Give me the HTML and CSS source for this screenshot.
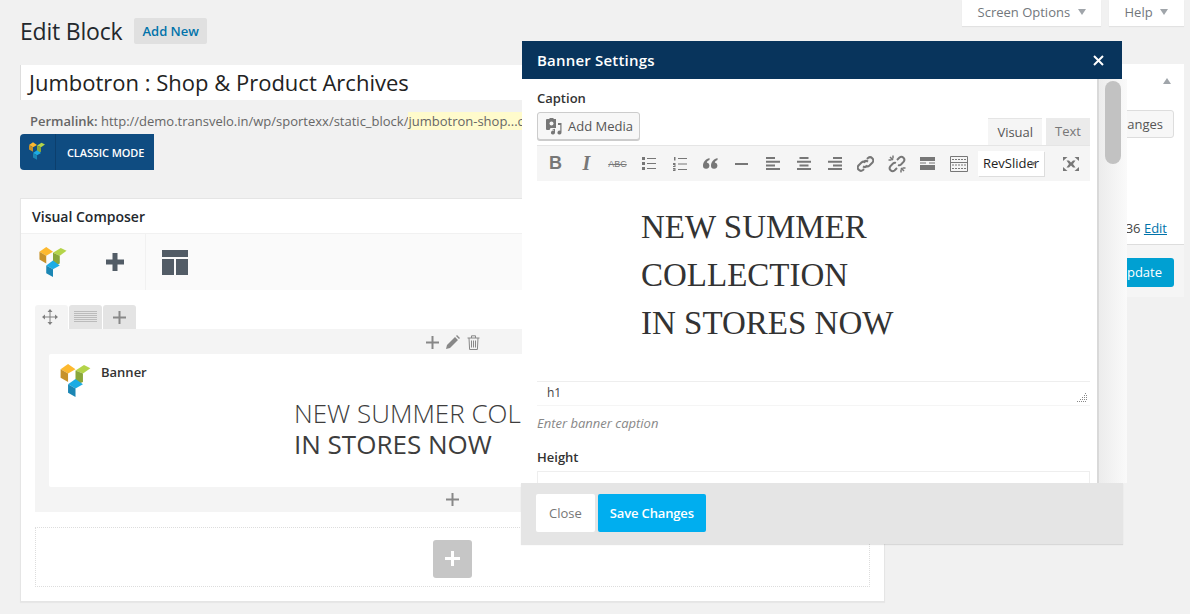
FILE: index.html
```html
<!DOCTYPE html>
<html lang="en">
<head>
   <meta charset="UTF-8">
   <title>Edit Block</title>
   <link rel="stylesheet" href="styles.css">
</head>
<body>
   <svg class="defs" width="0" height="0">
       <symbol id="vc-logo" viewBox="0 0 28 31">
           <path fill="#fdb92f" d="M0 5 7 0l7 5-7 4z"/>
           <path fill="#c7922a" d="M0 5l7 4v8l-7-4z"/>
           <path fill="#b4d44a" d="M14 6l8-5 6 3-7 5z"/>
           <path fill="#89a63a" d="M14 6l7 3v8l-7 3z"/>
           <path fill="#1cace4" d="M7 19l7-5 7 5-7 4z"/>
           <path fill="#1b86b4" d="M7 19l7 4v8l-7-4z"/>
       </symbol>
   </svg>

   <div class="screen-tabs">
       <div class="screen-tab">Screen Options <span class="arrow-down"></span></div>
       <div class="screen-tab screen-tab-help">Help <span class="arrow-down"></span></div>
   </div>

   <div class="page-head">
       <h1>Edit Block</h1>
       <span class="add-new">Add New</span>
   </div>

   <div class="columns">
       <div class="main-col">
           <div class="title-input">Jumbotron : Shop &amp; Product Archives</div>
           <p class="permalink"><b>Permalink:</b> http://demo.transvelo.in/wp/sportexx/static_block/<span class="slug">jumbotron-shop...child</span></p>
           <div class="classic-btn">
               <span class="classic-logo"><svg width="16" height="18"><use href="#vc-logo"/></svg></span>
               <span class="classic-text">CLASSIC MODE</span>
           </div>

           <div class="vc-box">
               <div class="vc-title">Visual Composer</div>
               <div class="vc-toolbar">
                   <svg class="vc-logo-big" width="28" height="30"><use href="#vc-logo"/></svg>
                   <svg class="vc-plus" width="20" height="20" viewBox="0 0 20 20"><path fill="#525c66" d="M7.500 1h5v6.500H19v5h-6.500V19h-5v-6.500H1v-5h6.500z"/></svg>
                   <span class="vc-sep"></span>
                   <svg class="vc-layout" width="26" height="25" viewBox="0 0 26 25"><path fill="#525c66" d="M0 0h26v7H0zM0 9h12v16H0zM14 9h12v16H14z"/></svg>
               </div>

               <div class="vc-content">
                   <div class="row-tabs">
                       <span class="row-tab row-tab-active">
                           <svg width="16" height="16" viewBox="0 0 16 16"><path fill="none" stroke="#808080" d="M8 1v14M1 8h14"/><path fill="#808080" d="M8 0l2.500 3h-5zM8 16l2.500-3h-5zM0 8l3-2.500v5zM16 8l-3-2.500v5z"/></svg>
                       </span>
                       <span class="row-tab">
                           <svg width="23" height="12" viewBox="0 0 23 12"><path stroke="#bbb" d="M0 .5h23M0 2.500h23M0 4.500h23M0 6.500h23M0 8.500h23M0 10.500h23"/></svg>
                       </span>
                       <span class="row-tab">
                           <svg width="13" height="13" viewBox="0 0 13 13"><path fill="#888" d="M5.500 0h2v5.500H13v2H7.500V13h-2V7.500H0v-2h5.500z"/></svg>
                       </span>
                   </div>
                   <div class="row-body">
                       <div class="row-controls">
                           <svg width="13" height="13" viewBox="0 0 13 13"><path fill="#888" d="M5.500 0h2v5.500H13v2H7.500V13h-2V7.500H0v-2h5.500z"/></svg>
                           <svg width="14" height="14" viewBox="0 0 14 14"><path fill="#888" d="M0 14l1-4 8-8 3 3-8 8zM10 1l1-1 3 3-1 1z"/></svg>
                           <svg width="13" height="15" viewBox="0 0 13 15"><path fill="none" stroke="#888" d="M.5 3h12M2 3l.6 11.500h7.800L11 3M4.500 3V.8h4V3M4.500 5.500v7M6.500 5.500v7M8.500 5.500v7"/></svg>
                       </div>
                       <div class="banner-card">
                           <div class="banner-name">
                               <svg width="31" height="33" class="banner-logo"><use href="#vc-logo"/></svg>
                               <span>Banner</span>
                           </div>
                           <div class="banner-text">
                               <div class="banner-light">NEW SUMMER COLLECTION</div>
                               <div>IN STORES NOW</div>
                           </div>
                       </div>
                       <div class="row-bottom">
                           <svg width="13" height="13" viewBox="0 0 13 13"><path fill="#888" d="M5.500 0h2v5.500H13v2H7.500V13h-2V7.500H0v-2h5.500z"/></svg>
                       </div>
                   </div>
                   <div class="add-area">
                       <span class="add-btn">
                           <svg width="15" height="15" viewBox="0 0 15 15"><path fill="#fff" d="M6 0h3v6h6v3H9v6H6V9H0V6h6z"/></svg>
                       </span>
                   </div>
               </div>
           </div>
       </div>

       <div class="side-box">
           <div class="side-top">
               <span class="arrow-up"></span>
               <span class="preview-btn">Preview Changes</span>
               <div class="revisions">Revisions: 36 <u>Edit</u></div>
           </div>
           <div class="side-actions"><span class="update-btn">Update</span></div>
       </div>
   </div>

   <div class="modal">
       <div class="modal-head">
           <span>Banner Settings</span>
           <svg width="11" height="11" viewBox="0 0 11 11"><path stroke="#fff" stroke-width="2" d="M1 1l9 9M10 1l-9 9"/></svg>
       </div>
       <div class="modal-main">
           <div class="modal-body">
               <div class="field-label">Caption</div>
               <div class="editor-top">
                   <span class="media-btn">
                       <svg width="18" height="17" viewBox="0 0 18 17"><path fill="#777" d="M3 1h2l1-1h3l1 1h2v9H6.500L5.500 12H3a1 1 0 0 1-1-1V2a1 1 0 0 1 1-1z"/><circle cx="7.500" cy="5.500" r="2" fill="#f7f7f7"/><path fill="#777" d="M14 5h3.500v9.500a2 2 0 1 1-1.200-1.800V7H14zM8 11.500l3-.8v3.800a2 2 0 1 1-1.200-1.800V12z"/></svg>
                       Add Media
                   </span>
                   <div class="editor-tabs">
                       <span class="editor-tab editor-tab-active">Visual</span>
                       <span class="editor-tab">Text</span>
                   </div>
               </div>
               <div class="mce-toolbar">
                   <span class="mce-btn mce-b">B</span>
                   <span class="mce-btn mce-i">I</span>
                   <span class="mce-btn mce-abc">ABC</span>
                   <span class="mce-btn"><svg width="14" height="13" viewBox="0 0 14 13"><path fill="#777" d="M0 0h3v3H0zM0 5h3v3H0zM0 10h3v3H0zM5 1h9v1H5zM5 6h9v1H5zM5 11h9v1H5z"/></svg></span>
                   <span class="mce-btn"><svg width="14" height="14" viewBox="0 0 14 14"><path fill="#777" d="M1 0h1.500v3.500H1zM0 6h2.500v4H0v-1h1.500V8H0zM0 11h2.500v3H0v-1h1.500v-.5H0zM5 1h9v1H5zM5 6.500h9v1H5zM5 12h9v1H5z"/></svg></span>
                   <span class="mce-btn"><svg width="15" height="11" viewBox="0 0 15 11"><path fill="#777" d="M6.500 0v2C5 2.500 4 3.500 3.800 4.500a3.200 3.200 0 1 1-3.800 3C0 4 3 .8 6.500 0zM14.500 0v2C13 2.500 12 3.500 11.800 4.500a3.200 3.200 0 1 1-3.800 3C8 4 11 .8 14.500 0z"/></svg></span>
                   <span class="mce-btn"><svg width="13" height="2" viewBox="0 0 13 2"><path fill="#777" d="M0 0h13v2H0z"/></svg></span>
                   <span class="mce-btn"><svg width="14" height="13" viewBox="0 0 14 13"><path fill="#777" d="M0 0h9v2H0zM0 3.700h14v2H0zM0 7.400h9v2H0zM0 11h14v2H0z"/></svg></span>
                   <span class="mce-btn"><svg width="14" height="13" viewBox="0 0 14 13"><path fill="#777" d="M2.500 0h9v2h-9zM0 3.700h14v2H0zM2.500 7.400h9v2h-9zM0 11h14v2H0z"/></svg></span>
                   <span class="mce-btn"><svg width="14" height="13" viewBox="0 0 14 13"><path fill="#777" d="M5 0h9v2H5zM0 3.700h14v2H0zM5 7.400h9v2H5zM0 11h14v2H0z"/></svg></span>
                   <span class="mce-btn"><svg width="17" height="16" viewBox="0 0 17 16"><path fill="none" stroke="#777" stroke-width="2" d="M7 6a3 3 0 0 1 4-.4M10 3l1-1a3.200 3.200 0 0 1 4.500 4.500l-3 3a3 3 0 0 1-4 0M10 10a3 3 0 0 1-4 .4M7 13l-1 1a3.200 3.200 0 0 1-4.500-4.500l3-3a3 3 0 0 1 4 0"/></svg></span>
                   <span class="mce-btn"><svg width="18" height="18" viewBox="0 0 18 18"><path fill="none" stroke="#777" stroke-width="2" d="M9 5l2.500-2.500a3 3 0 0 1 4.200 4.200L13 9.500a3 3 0 0 1-3 .6M9 13l-2.500 2.500a3 3 0 0 1-4.200-4.200L5 8.500a3 3 0 0 1 3-.6"/><path fill="none" stroke="#777" stroke-width="1.500" d="M5 .5v3M.5 5h3M2 2l3 3M13 17.500v-3M17.500 13h-3M16 16l-3-3"/></svg></span>
                   <span class="mce-btn"><svg width="15" height="13" viewBox="0 0 15 13"><path fill="#777" d="M0 0h15v4H0zM0 8h15v5H0zM0 5.500h6v1H0zM9 5.500h6v1H9z"/></svg></span>
                   <span class="mce-btn"><svg width="18" height="16" viewBox="0 0 18 16"><path fill="none" stroke="#777" d="M.5.500h17v15H.500zM.5 6.500h17"/><path stroke="#777" stroke-dasharray="2 1" d="M2 3.500h14M2 9h14M2 12.500h14"/></svg></span>
                   <span class="mce-rev">RevSlider<span class="rev-caret"></span></span>
                   <span class="mce-btn mce-full"><svg width="16" height="14" viewBox="0 0 16 14"><path fill="#777" d="M0 0h4.500L0 4zM16 0h-4.500L16 4zM0 14h4.500L0 10zM16 14h-4.500L16 10z"/><path fill="#777" d="M3.500 3.500H6L8 5.500l2-2h2.500L10 7l2.500 3.500H10l-2-2-2 2H3.500L6 7z"/></svg></span>
               </div>
               <div class="editor-area">
                   <p>NEW SUMMER</p>
                   <p>COLLECTION</p>
                   <p>IN STORES NOW</p>
               </div>
               <div class="status-bar">
                   <span>h1</span>
                   <svg width="10" height="10" viewBox="0 0 10 10"><path stroke="#888" stroke-dasharray="1 1" d="M0 9.500h10M3 7.500h7M5 5.500h5M7 3.500h3M8 1.500h2"/></svg>
               </div>
               <div class="help-text">Enter banner caption</div>
               <div class="field-label field-height">Height</div>
               <div class="height-input"></div>
           </div>
           <div class="modal-scroll"><span class="scroll-thumb"></span></div>
       </div>
       <div class="modal-foot">
           <span class="foot-btn foot-close">Close</span>
           <span class="foot-btn foot-save">Save Changes</span>
       </div>
   </div>
</body>
</html>
```

FILE: styles.css
```css
html, body {
    margin: 0;
    height: 614px;
    overflow: hidden;
}
body {
    font-family: "Open Sans", sans-serif;
    font-size: 13px;
    background-color: #f1f1f1;
    color: #444;
    padding: 0 6px 0 20px;
    box-sizing: border-box;
    position: relative;
}
p { margin: 0; }
.defs { position: absolute; }

/* top tabs */
.screen-tabs {
    display: flex;
    justify-content: flex-end;
    gap: 8px;
}
.screen-tab {
    height: 26px;
    line-height: 25px;
    padding: 0 15px 0 16px;
    background-color: #fff;
    color: #72777c;
    box-shadow: 0 1px 1px rgba(0, 0, 0, 0.06);
}
.screen-tab-help { padding-right: 16px; }
.arrow-down {
    display: inline-block;
    margin-left: 4px;
    border: 4px solid transparent;
    border-top: 6px solid #a0a5aa;
    border-bottom: 0;
    vertical-align: 2px;
}
.page-head {
    display: flex;
    align-items: center;
    height: 26px;
    margin-top: -8px;
}
h1 {
    margin: 0;
    font-size: 23px;
    font-weight: 400;
    letter-spacing: -0.2px;
    color: #23282d;
}
.add-new {
    margin-left: 12px;
    padding: 0 8px;
    height: 26px;
    line-height: 26px;
    background-color: #e0e0e0;
    border-radius: 2px;
    color: #0073aa;
    font-weight: 600;
}

.columns {
    display: flex;
    gap: 19px;
    margin-top: 20px;
}
.main-col { width: 865px; flex: none; }

.title-input {
    width: 864px;
    height: 35px;
    margin-top: 1px;
    line-height: 35px;
    padding-left: 8px;
    box-sizing: border-box;
    background-color: #fff;
    border-left: 1px solid #ddd;
    font-size: 22px;
    color: #222;
}
.permalink {
    margin-top: 11px;
    padding-left: 10px;
    line-height: 20px;
    color: #666;
    white-space: nowrap;
}
.permalink b { font-weight: 600; }
.slug { background-color: #fffbcc; }

.classic-btn {
    display: flex;
    width: 134px;
    height: 36px;
    margin-top: 3px;
    background-color: #0f4c81;
    border-radius: 4px 0 0 4px;
    color: #fff;
}
.classic-logo {
    display: flex;
    width: 36px;
    align-items: center;
    padding-left: 9px;
    box-sizing: border-box;
    padding-bottom: 2px;
    border-right: 1px solid #0c3f6d;
}
.classic-text {
    line-height: 38px;
    padding-left: 11px;
    font-size: 11px;
    font-weight: 600;
    letter-spacing: -0.1px;
}

.vc-box {
    margin-top: 28px;
    height: 404px;
    background-color: #fff;
    border: 1px solid #e5e5e5;
    box-sizing: border-box;
    box-shadow: 0 1px 1px rgba(0, 0, 0, 0.04);
}
.vc-title {
    height: 35px;
    line-height: 36px;
    padding-left: 11px;
    font-size: 14px;
    font-weight: 600;
    color: #23282d;
    border-bottom: 1px solid #f1f1f1;
    box-sizing: border-box;
}
.vc-toolbar {
    display: flex;
    align-items: center;
    height: 56px;
    background-color: #fafafa;
}
.vc-logo-big { margin-left: 18px; }
.vc-plus { margin-left: 38px; }
.vc-sep {
    width: 1px;
    height: 56px;
    margin-left: 20px;
    background-color: #f1f1f1;
}
.vc-layout { margin-left: 16px; }
.vc-content { padding: 15px 14px 0; }

.row-tabs {
    display: flex;
    gap: 1px;
    height: 24px;
}
.row-tab {
    display: flex;
    align-items: center;
    justify-content: center;
    width: 33px;
    background-color: #e4e4e4;
    border-radius: 3px 3px 0 0;
}
.row-tab-active {
    background-color: #f4f4f4;
    padding-right: 3px;
    box-sizing: border-box;
}
.row-body {
    height: 183px;
    padding: 0 14px;
    background-color: #f4f4f4;
}
.row-controls {
    display: flex;
    justify-content: center;
    align-items: center;
    gap: 7px;
    height: 25px;
    padding-top: 1px;
    box-sizing: border-box;
}
.banner-card {
    height: 133px;
    padding: 10px 11px;
    box-sizing: border-box;
    background-color: #fff;
    border-radius: 2px;
}
.banner-name {
    display: flex;
    gap: 10px;
    color: #333;
    font-weight: 600;
}
.banner-name span { line-height: 17px; }
.banner-text {
    margin-top: 1px;
    padding-left: 234px;
    font-size: 26px;
    line-height: 31px;
    color: #3d3d3d;
    white-space: nowrap;
}
.banner-light { font-weight: 300; }
.row-bottom {
    display: flex;
    justify-content: center;
    padding-top: 6px;
}
.add-area {
    display: flex;
    align-items: center;
    justify-content: center;
    height: 60px;
    margin-top: 15px;
    padding-top: 3px;
    border: 1px dotted #ddd;
    box-sizing: border-box;
}
.add-btn {
    display: flex;
    align-items: center;
    justify-content: center;
    width: 39px;
    height: 38px;
    background-color: #c6c6c6;
    border-radius: 3px;
}

/* sidebar, mostly behind the modal */
.side-box {
    width: 280px;
    height: 233px;
    flex: none;
    background-color: #fff;
}
.side-top {
    display: flex;
    flex-direction: column;
    align-items: flex-end;
    height: 181px;
    padding: 14px 10px 0;
    box-sizing: border-box;
    border-bottom: 1px solid #ddd;
}
.arrow-up {
    margin-right: 3px;
    border: 4px solid transparent;
    border-bottom: 6px solid #a0a5aa;
    border-top: 0;
}
.preview-btn {
    margin-top: 26px;
    padding: 0 10px;
    line-height: 26px;
    border: 1px solid #ddd;
    border-radius: 3px;
    background-color: #f7f7f7;
    color: #555;
}
.revisions {
    margin-top: 81px;
    margin-right: 7px;
    color: #444;
}
.revisions u { color: #0073aa; }
.side-actions {
    display: flex;
    justify-content: flex-end;
    height: 52px;
    padding: 13px 10px 0;
    box-sizing: border-box;
    background-color: #f5f5f5;
}
.update-btn {
    height: 29px;
    padding: 0 12px;
    line-height: 29px;
    background-color: #00a0d2;
    border-radius: 3px;
    color: #fff;
}

/* modal */
.modal {
    position: absolute;
    left: 522px;
    top: 41px;
    width: 600px;
}
.modal-head {
    display: flex;
    justify-content: space-between;
    align-items: center;
    height: 38px;
    padding: 0 18px 0 15px;
    background-color: #08345c;
    color: #fff;
    font-size: 15px;
    font-weight: 600;
    letter-spacing: 0.2px;
}
.modal-main {
    display: flex;
    height: 404px;
    margin-right: -5px;
    overflow: hidden;
}
.modal-body {
    width: 577px;
    flex: none;
    padding: 0 7px 0 15px;
    box-sizing: border-box;
    background-color: #fff;
    border-right: 2px solid #d9d9d9;
}
.modal-scroll {
    width: 28px;
    padding: 2px 0 0 6px;
    box-sizing: border-box;
    background: linear-gradient(to right, #ececec, #fafafa);
}
.scroll-thumb {
    display: block;
    width: 16px;
    height: 83px;
    background-color: #c2c2c2;
    border-radius: 8px;
}
.field-label {
    margin-top: 10px;
    line-height: 18px;
    font-weight: 600;
    color: #333;
}
.editor-top {
    display: flex;
    justify-content: space-between;
    height: 33px;
    margin-top: 5px;
}
.media-btn {
    display: flex;
    align-items: center;
    gap: 6px;
    height: 28px;
    padding: 0 6px;
    box-sizing: border-box;
    background-color: #f7f7f7;
    border: 1px solid #ccc;
    border-radius: 3px;
    box-shadow: 0 1px 0 #ccc;
    color: #555;
}
.editor-tabs {
    display: flex;
    gap: 4px;
    align-self: flex-end;
}
.editor-tab {
    height: 27px;
    line-height: 27px;
    padding: 0 9px;
    background-color: #ebebeb;
    color: #777;
}
.editor-tab-active {
    background-color: #f5f5f5;
    color: #555;
    border-top: 1px solid #e5e5e5;
    height: 26px;
}
.mce-toolbar {
    display: flex;
    align-items: center;
    height: 36px;
    padding-left: 3px;
    background-color: #f5f5f5;
    border-top: 1px solid #e5e5e5;
    box-sizing: border-box;
    color: #777;
}
.mce-btn {
    display: flex;
    align-items: center;
    justify-content: center;
    width: 31px;
    flex: none;
}
.mce-b {
    font-family: "Liberation Sans", sans-serif;
    font-size: 18px;
    font-weight: 700;
}
.mce-i {
    font-family: "Liberation Serif", serif;
    font-size: 20px;
    font-weight: 700;
    font-style: italic;
}
.mce-abc {
    font-family: "Liberation Sans", sans-serif;
    font-size: 9px;
    text-decoration: line-through;
}
.mce-rev {
    position: relative;
    width: 66px;
    height: 25px;
    margin-left: 4px;
    line-height: 25px;
    text-align: center;
    background-color: #fff;
    box-shadow: 1px 1px 0 #ddd;
    color: #222;
    flex: none;
}
.rev-caret {
    position: absolute;
    right: 8px;
    top: 11px;
    border: 3px solid transparent;
    border-top: 4px solid #888;
    border-bottom: 0;
}
.mce-full { margin-left: 11px; }
.editor-area {
    height: 201px;
    padding: 22px 0 0 104px;
    box-sizing: border-box;
    font-family: "Liberation Serif", serif;
    font-size: 33px;
    line-height: 48px;
    color: #333;
    border-bottom: 1px solid #eee;
}
.status-bar {
    display: flex;
    justify-content: space-between;
    align-items: flex-end;
    height: 24px;
    padding: 0 3px 3px 10px;
    box-sizing: border-box;
    border-bottom: 1px solid #f5f5f5;
    font-size: 12px;
    color: #444;
}
.status-bar span { align-self: flex-start; line-height: 22px; }
.help-text {
    margin-top: 8px;
    line-height: 18px;
    font-size: 13px;
    font-style: italic;
    color: #888;
}
.field-height { margin-top: 16px; }
.height-input {
    height: 30px;
    margin-top: 5px;
    border: 1px solid #eee;
}
.modal-foot {
    display: flex;
    gap: 3px;
    height: 61px;
    margin: 0 -1px;
    padding: 11px 15px 0;
    box-sizing: border-box;
    background-color: #e5e5e5;
    box-shadow: 0 1px 1px rgba(0, 0, 0, 0.1);
    position: relative;
}
.foot-btn {
    height: 38px;
    line-height: 38px;
    border-radius: 2px;
}
.foot-close {
    padding: 0 13px;
    background-color: #fff;
    color: #777;
}
.foot-save {
    padding: 0 12px;
    background-color: #00aeef;
    color: #fff;
    font-weight: 600;
    letter-spacing: -0.15px;
}
```
